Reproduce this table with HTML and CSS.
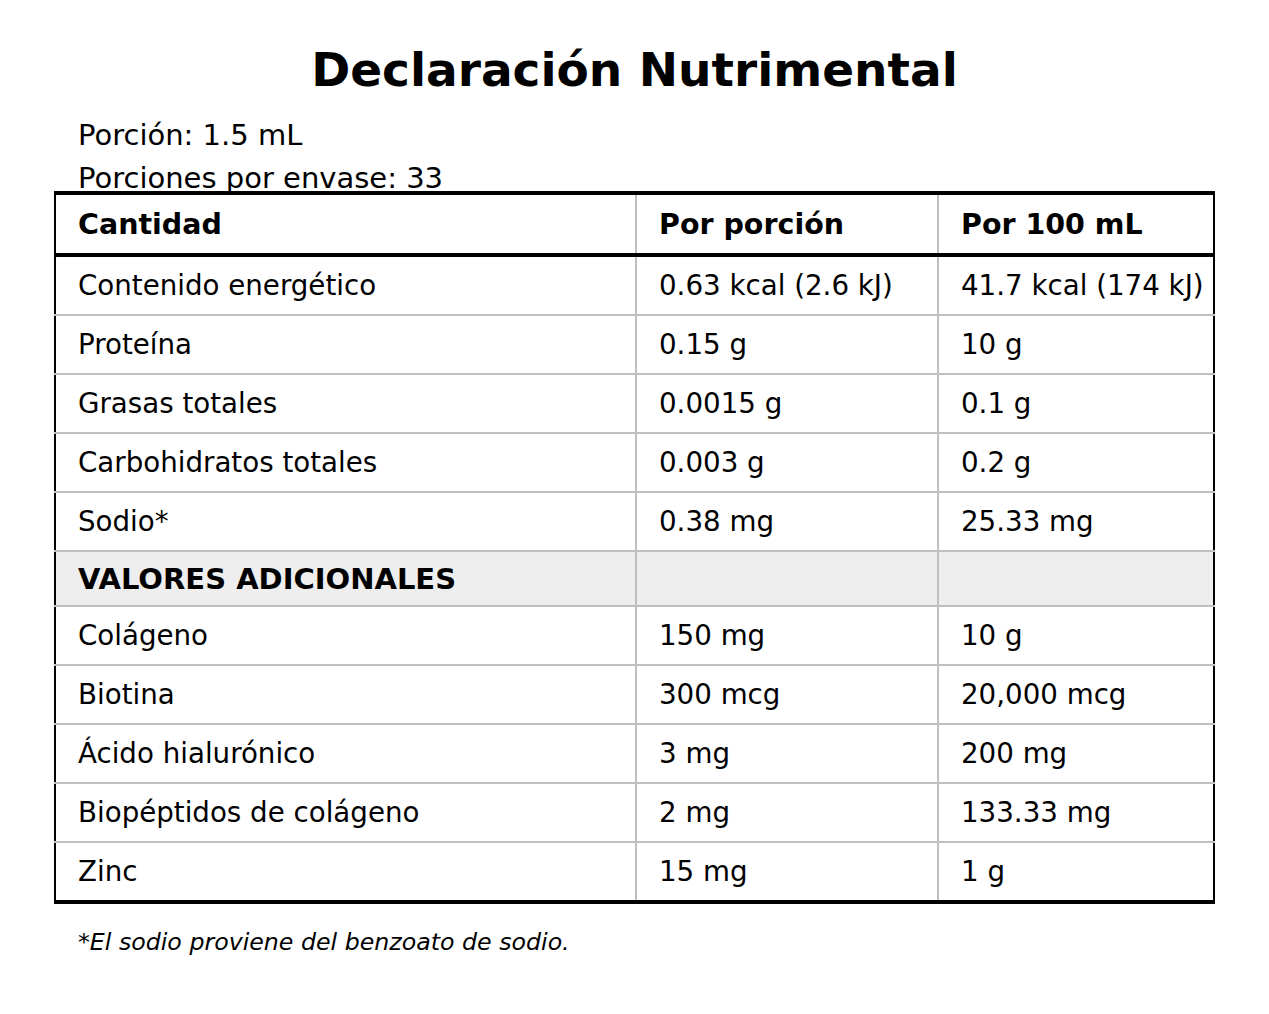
FILE: index.html
```html
<!DOCTYPE html>
<html lang="es">
<head>
<meta charset="utf-8">
<title>Declaración Nutrimental</title>
<link rel="stylesheet" href="styles.css">
</head>
<body>
<main class="page">
  <h1 class="title">Declaración Nutrimental</h1>
  <div class="info">
    <p class="info-line">Porción: 1.5 mL</p>
    <p class="info-line">Porciones por envase: 33</p>
  </div>
  <table class="nutri">
    <colgroup>
      <col class="c1"><col class="c2"><col class="c3">
    </colgroup>
    <thead>
      <tr><th>Cantidad</th><th>Por porción</th><th>Por 100 mL</th></tr>
    </thead>
    <tbody>
      <tr><td>Contenido energético</td><td>0.63 kcal (2.6 kJ)</td><td>41.7 kcal (174 kJ)</td></tr>
      <tr><td>Proteína</td><td>0.15 g</td><td>10 g</td></tr>
      <tr><td>Grasas totales</td><td>0.0015 g</td><td>0.1 g</td></tr>
      <tr><td>Carbohidratos totales</td><td>0.003 g</td><td>0.2 g</td></tr>
      <tr><td>Sodio*</td><td>0.38 mg</td><td>25.33 mg</td></tr>
      <tr class="section"><td>VALORES ADICIONALES</td><td></td><td></td></tr>
      <tr><td>Colágeno</td><td>150 mg</td><td>10 g</td></tr>
      <tr><td>Biotina</td><td>300 mcg</td><td>20,000 mcg</td></tr>
      <tr><td>Ácido hialurónico</td><td>3 mg</td><td>200 mg</td></tr>
      <tr><td>Biopéptidos de colágeno</td><td>2 mg</td><td>133.33 mg</td></tr>
      <tr class="last"><td>Zinc</td><td>15 mg</td><td>1 g</td></tr>
    </tbody>
  </table>
  <p class="note">*El sodio proviene del benzoato de sodio.</p>
</main>
</body>
</html>
```
FILE: styles.css
```css
html, body {
  margin: 0;
  padding: 0;
  background: #fff;
  color: #000;
  font-family: "DejaVu Sans", sans-serif;
}
.page {
  padding: 40px 54px 0 54px;
}
.title {
  margin: 0;
  text-align: center;
  font-size: 47px;
  font-weight: bold;
  line-height: 60px;
}
.info {
  padding: 14px 0 0 24px;
}
.info-line {
  margin: 0;
  font-size: 29px;
  line-height: 43px;
}
.nutri {
  width: 100%;
  border-collapse: collapse;
  font-family: "DejaVu Sans", sans-serif;
  font-size: 27.7px;
  border-left: 2px solid #000;
  border-right: 2px solid #000;
  border-top: 4px solid #000;
  border-bottom: 4px solid #000;
  margin-top: -9px;
}
.c1 { width: 581px; }
.c2 { width: 302px; }
.nutri th, .nutri td {
  text-align: left;
  padding: 0 0 0 22px;
  height: 57px;
  border: 2px solid #bfbfbf;
  white-space: nowrap;
}
.nutri th:first-child, .nutri td:first-child { border-left: 2px solid #000; }
.nutri th:last-child, .nutri td:last-child { border-right: 2px solid #000; }
.nutri th {
  font-weight: bold;
  font-size: 28.5px;
  height: 58px;
  border-bottom: 4px solid #000;
  border-top: 4px solid #000;
}
.nutri .section td {
  background: #eeeeee;
  font-weight: bold;
  font-size: 29px;
  height: 53px;
}
.nutri .last td {
  border-bottom: 4px solid #000;
}
.note {
  margin: 24px 0 0 24px;
  font-size: 23.7px;
  font-style: italic;
}
```
